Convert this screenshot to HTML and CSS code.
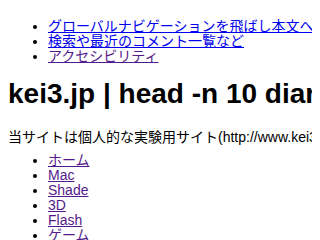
FILE: index.html
```html
<!DOCTYPE html>
<html lang="ja">
<head>
  <meta charset="UTF-8" />
  <title>kei3.jp | head -n 10 diary</title>
  <link rel="stylesheet" href="styles.css">
</head>
<body>
  <ul class="skip">
    <li><a href="#content">グローバルナビゲーションを飛ばし本文へ</a></li>
    <li><a href="#search">検索や最近のコメント一覧など</a></li>
    <li><a href="#access" class="visited">アクセシビリティ</a></li>
  </ul>

  <h1 class="title">kei3.jp | head -n 10 diary</h1>

  <p class="lead">当サイトは個人的な実験用サイト(http://www.kei3.jp/)です。</p>

  <ul class="nav">
    <li><a href="#" class="visited">ホーム</a></li>
    <li><a href="#" class="visited">Mac</a></li>
    <li><a href="#" class="visited">Shade</a></li>
    <li><a href="#" class="visited">3D</a></li>
    <li><a href="#" class="visited">Flash</a></li>
    <li><a href="#" class="visited">ゲーム</a></li>
    <li><a href="#" class="visited">その他</a></li>
  </ul>
</body>
</html>
```

FILE: styles.css
```css
html, body {
  height: 240px;
  overflow: hidden;
}
body {
  margin: 8px;
  font-family: "Liberation Sans", "Noto Sans CJK JP", sans-serif;
  font-size: 14px;
  line-height: 15px;
  color: #000;
  background: #fff;
  white-space: nowrap;
}
ul {
  margin: 0;
  padding-left: 40px;
}
.skip {
  margin-top: 11px;
}
a {
  color: #0000ee;
}
a.visited {
  color: #551a8b;
}
.title {
  font-size: 28px;
  line-height: 32px;
  font-weight: bold;
  margin: 14px 0 20px;
}
.lead {
  margin: 0 0 8px;
}
```
